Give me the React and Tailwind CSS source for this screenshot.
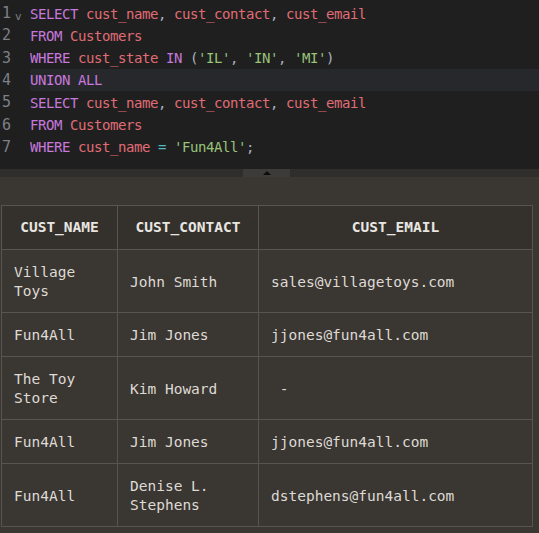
const KW = 'text-[#c678dd]'
const ID = 'text-[#e06c75]'
const STR = 'text-[#98c379]'
const PUN = 'text-[#abb2bf]'
const OP = 'text-[#56b6c2]'

const lines = [
  [['SELECT', KW], [' '], ['cust_name', ID], [',', PUN], [' '], ['cust_contact', ID], [',', PUN], [' '], ['cust_email', ID]],
  [['FROM', KW], [' '], ['Customers', ID]],
  [['WHERE', KW], [' '], ['cust_state', ID], [' '], ['IN', KW], [' '], ['(', PUN], ["'IL'", STR], [',', PUN], [' '], ["'IN'", STR], [',', PUN], [' '], ["'MI'", STR], [')', PUN]],
  [['UNION ALL', KW]],
  [['SELECT', KW], [' '], ['cust_name', ID], [',', PUN], [' '], ['cust_contact', ID], [',', PUN], [' '], ['cust_email', ID]],
  [['FROM', KW], [' '], ['Customers', ID]],
  [['WHERE', KW], [' '], ['cust_name', ID], [' '], ['=', OP], [' '], ["'Fun4All'", STR], [';', PUN]],
]

const rows = [
  ['Village Toys', 'John Smith', 'sales@villagetoys.com'],
  ['Fun4All', 'Jim Jones', 'jjones@fun4all.com'],
  ['The Toy Store', 'Kim Howard', '\u00a0-'],
  ['Fun4All', 'Jim Jones', 'jjones@fun4all.com'],
  ['Fun4All', 'Denise L. Stephens', 'dstephens@fun4all.com'],
]

function Editor() {
  return (
    <div className="h-[169px] bg-[#1f1f1f] pt-[2px] font-['DejaVu_Sans_Mono',monospace] text-[14px] tracking-[-0.43px]">
      {lines.map((toks, i) => (
        <div key={i} className={`flex h-[22.33px] items-center leading-[22.33px] ${i === 3 ? 'bg-[#26282c]' : ''}`}>
          <div className="relative h-full w-[30px] shrink-0 bg-[#1f1f1f] pl-[2px] text-[15px] text-[#7d8087]">
            {i + 1}
            {i === 0 && <span className="absolute left-[15px] top-[4px] text-[11px] text-[#7d8087]">v</span>}
          </div>
          <div className="whitespace-pre pt-[1px]">
            {toks.map(([t, c], j) => (
              <span key={j} className={c || ''}>{t}</span>
            ))}
          </div>
        </div>
      ))}
    </div>
  )
}

export default function App() {
  return (
    <div className="h-[533px] w-[539px] overflow-hidden bg-[#3a3632]">
      <Editor />
      <div className="relative h-[8px] bg-[#302e2b]">
        <div className="absolute left-[243px] top-0 flex h-[8px] w-[47px] items-center justify-center bg-[#3d3b38]">
          <div className="h-0 w-0 border-x-[4px] border-b-[4px] border-x-transparent border-b-[#0d0d0d]" />
        </div>
      </div>
      <div className="px-[1px] pt-[28px]">
        <table className="w-[532px] table-fixed border-collapse font-['DejaVu_Sans_Mono',monospace] text-[14.5px] leading-[19px] text-[#dedad4]">
          <colgroup>
            <col className="w-[116px]" />
            <col className="w-[141px]" />
            <col />
          </colgroup>
          <thead>
            <tr className="bg-[#34312d]">
              {['CUST_NAME', 'CUST_CONTACT', 'CUST_EMAIL'].map((h) => (
                <th key={h} className="h-[44px] border border-[#58544f] px-3 text-center font-bold text-[#e9e6e1]">{h}</th>
              ))}
            </tr>
          </thead>
          <tbody>
            {rows.map((r, i) => (
              <tr key={i}>
                {r.map((c, j) => (
                  <td key={j} className="border border-[#58544f] px-3 pt-[13px] pb-[11px] align-middle whitespace-pre-wrap">{c}</td>
                ))}
              </tr>
            ))}
          </tbody>
        </table>
      </div>
    </div>
  )
}
